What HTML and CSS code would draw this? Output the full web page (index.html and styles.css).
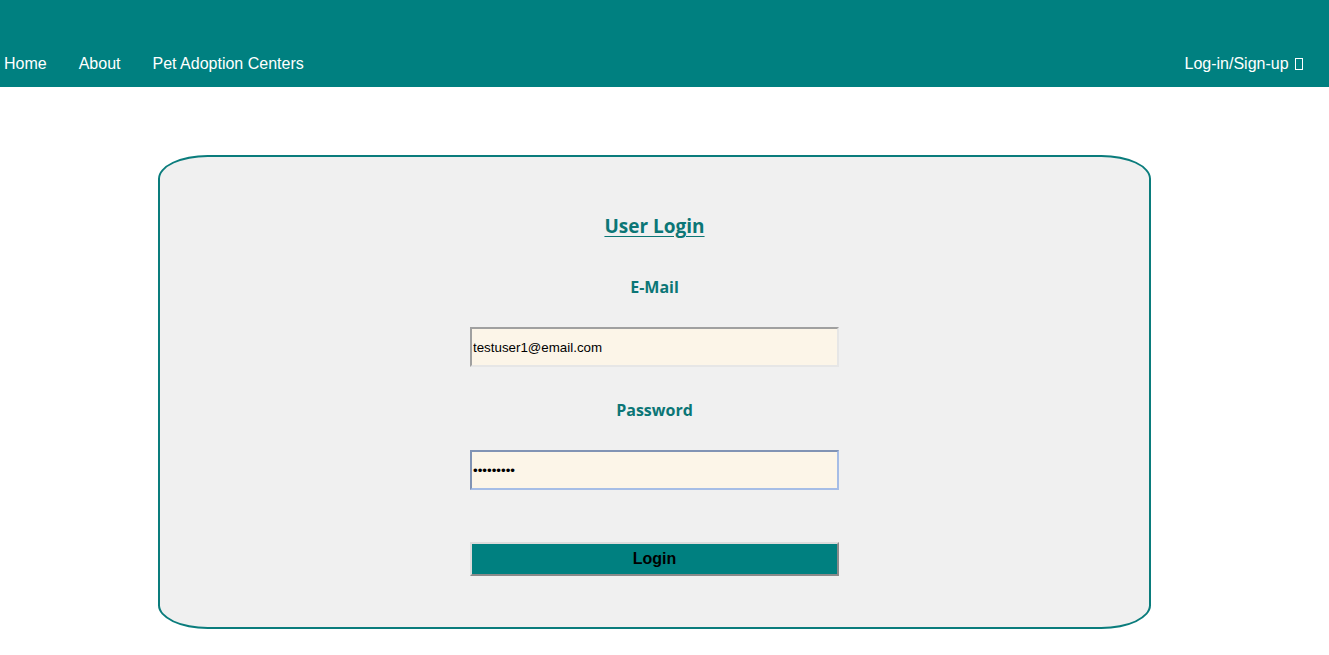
FILE: index.html
```html
<!DOCTYPE html>
<html>
<head>
<meta charset="utf-8">
<title>User Login</title>
<link rel="stylesheet" href="styles.css">
</head>
<body>
<nav class="topnav">
  <div class="nav-left">
    <a class="nav-link" href="#">Home</a>
    <a class="nav-link" href="#">About</a>
    <a class="nav-link" href="#">Pet Adoption Centers</a>
  </div>
  <a class="nav-link nav-login" href="#">Log-in/Sign-up <span class="tofu"></span></a>
</nav>
<main class="page">
  <form class="card">
    <h2 class="title">User Login</h2>
    <label class="label" for="email">E-Mail</label>
    <input class="field" id="email" type="text" value="testuser1@email.com">
    <label class="label label-pw" for="pw">Password</label>
    <input class="field field-focus" id="pw" type="password" value="123456789">
    <button class="btn" type="button">Login</button>
  </form>
</main>
</body>
</html>
```

FILE: styles.css
```css
html, body {
  margin: 0;
  padding: 0;
  background: #ffffff;
  font-family: "Liberation Sans", Arial, sans-serif;
}

.topnav {
  height: 87px;
  box-sizing: border-box;
  background: #008080;
  display: flex;
  justify-content: space-between;
  align-items: flex-end;
  padding: 0 26px 14px 4px;
}

.nav-left {
  display: flex;
  gap: 32px;
}

.nav-link {
  color: #ffffff;
  text-decoration: none;
  font-size: 16px;
  line-height: 18px;
}

.tofu {
  display: inline-block;
  width: 8px;
  height: 12px;
  border: 1px solid #ffffff;
  box-sizing: border-box;
  margin-left: 2px;
  vertical-align: -1px;
}

.page {
  padding: 68px 0 0 158px;
}

.card {
  width: 993px;
  height: 474px;
  box-sizing: border-box;
  border: 2px solid #0a7c7c;
  border-radius: 5%;
  background: #f0f0f0;
  display: flex;
  flex-direction: column;
  align-items: center;
  padding-top: 55px;
}

.title {
  margin: 0;
  font-family: "Open Sans", "Noto Sans", sans-serif;
  font-size: 19px;
  line-height: 28px;
  font-weight: 700;
  color: #0b7676;
  text-decoration: underline;
  text-underline-offset: 3px;
}

.label {
  margin-top: 36px;
  font-family: "Open Sans", "Noto Sans", sans-serif;
  font-size: 16px;
  line-height: 22px;
  font-weight: 700;
  color: #0b7676;
}

.field {
  margin-top: 29px;
  width: 369px;
  height: 40px;
  box-sizing: border-box;
  padding: 0 0 0 1px;
  border: 2px solid #e6e6e6;
  border-top-color: #a0a0a0;
  border-left-color: #a0a0a0;
  background: #fcf5e8;
  font-family: "Liberation Sans", Arial, sans-serif;
  font-size: 13.33px;
  color: #000000;
  outline: none;
}

.label-pw {
  margin-top: 32px;
}

.field-focus {
  border: 2px solid #a6bde6;
  border-top-color: #8193b4;
  border-left-color: #8193b4;
}

.btn {
  margin-top: 52px;
  width: 369px;
  height: 34px;
  box-sizing: border-box;
  background: #008080;
  border: 2px solid #8a8a8a;
  border-top-color: #dcdcdc;
  border-left-color: #dcdcdc;
  font-family: "Liberation Sans", Arial, sans-serif;
  font-size: 16px;
  font-weight: 700;
  color: #000000;
  padding: 0;
}
```
